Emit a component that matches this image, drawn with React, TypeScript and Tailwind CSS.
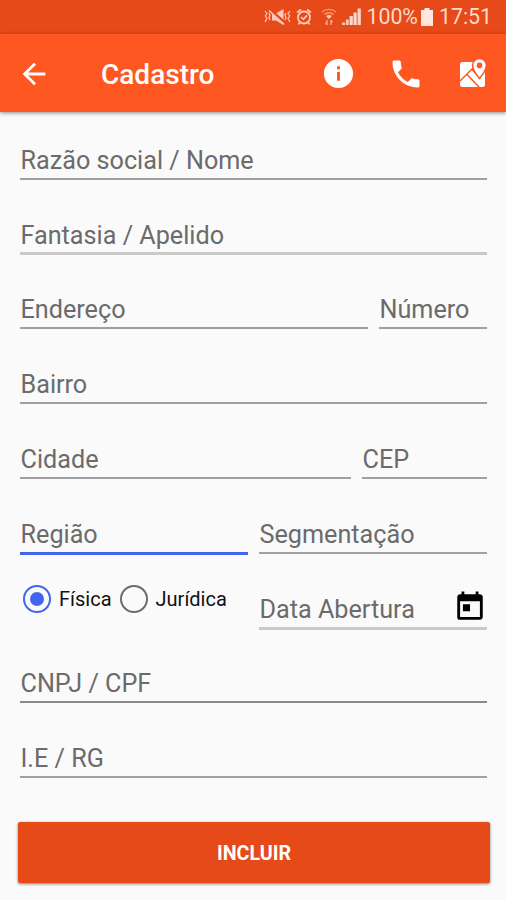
import type { ReactNode } from 'react'
import { MdArrowBack, MdInfo, MdPhone, MdToday } from 'react-icons/md'

interface FieldProps {
  label: string
  className?: string
  line?: string
  children?: ReactNode
}

function Field({ label, className = 'flex-1', line = 'h-[41px] border-b-2 border-[#a0a0a0]', children }: FieldProps) {
  return (
    <div className={`relative ${line} ${className}`}>
      <span className="block pt-1 pl-[0.5px] text-[25.2px] leading-9 text-[#6b6b6b] whitespace-nowrap">{label}</span>
      {children}
    </div>
  )
}

function Row({ children }: { children: ReactNode }) {
  return <div className="flex items-end gap-[11px] h-[74.8px]">{children}</div>
}

function Radio({ label, checked = false }: { label: string; checked?: boolean }) {
  return (
    <label className="flex items-center gap-2">
      <span
        className={`flex items-center justify-center size-7 rounded-full border-[2.5px] ${checked ? 'border-[#4265f0]' : 'border-[#6b6b6b]'}`}
      >
        {checked && <span className="size-3.5 rounded-full bg-[#4265f0]" />}
      </span>
      <span className="text-[20px] leading-7 text-[#111111]">{label}</span>
    </label>
  )
}

function MapIcon() {
  return (
    <svg className="w-[28px] h-[30px]" viewBox="0 0 28 30" fill="none">
      <rect x="1" y="4" width="25" height="25" rx="2.5" fill="white" />
      <path d="M0 24L15 9M8 16.5L21 30M13 11.5L20.5 19.5" stroke="#ff5722" strokeWidth="1.5" />
      <path
        d="M20.5 0.5C16.6 0.5 13.6 3.4 13.6 7.2C13.6 12 20.5 20.5 20.5 20.5C20.5 20.5 27.4 12 27.4 7.2C27.4 3.4 24.4 0.5 20.5 0.5Z"
        fill="white"
        stroke="#ff5722"
        strokeWidth="1.5"
      />
      <circle cx="20.5" cy="7.4" r="2.8" fill="#ff5722" />
    </svg>
  )
}

function StatusIcons() {
  return (
    <svg className="w-[100px] h-5" viewBox="0 0 100 20" fill="none">
      {/* Vibrate / muted */}
      <path
        d="M1 4L3 6.5L1.3 9L3 11.5L1 15M5 6L6 8L5 10.5L6 13M22 6L21 8L22 10.5L21 13M26 4L24 6.5L25.7 9L24 11.5L26 15"
        stroke="#ffc9b7"
        strokeWidth="1.2"
      />
      <path d="M8 6.5H12L19.5 2V18L12 13.5H8Z" fill="#ffc9b7" />
      <path d="M6 2.5L22 16.5" stroke="#e64a19" strokeWidth="2.4" />
      <path d="M5 3.5L20 17.5" stroke="#ffc9b7" strokeWidth="1.6" />
      {/* Alarm */}
      <circle cx="40" cy="10.5" r="6" stroke="#ffc9b7" strokeWidth="1.8" />
      <path d="M37 10L39.3 12.3L43 8.3M33 5.5L37 2.5M43 2.5L47 5.5M36 15L34.5 17.5M44 15L45.5 17.5" stroke="#ffc9b7" strokeWidth="1.7" />
      {/* Wifi */}
      <path d="M58 5C62 1.5 68 1.5 72 5M60.5 7.5C63 5.2 67 5.2 69.5 7.5" stroke="#f59b7e" strokeWidth="1.4" />
      <path d="M62 9Q65 7 68 9L65 12Z" fill="#ffc9b7" />
      <path d="M63 13V18M67 13V18M61.5 15.5L63 18M68.5 15.5L67 13" stroke="#f9ad95" strokeWidth="1.3" />
      {/* Signal */}
      <path d="M79.5 15.5V18M83.3 12.5V18" stroke="#ffc3b0" strokeWidth="3" />
      <path d="M87.2 9V18M91.1 5.5V18M95.2 1.5V18" stroke="#ffd9cc" strokeWidth="3.2" />
    </svg>
  )
}

export default function App() {
  return (
    <div className="w-[506px] h-[900px] bg-[#fafafa] overflow-hidden font-['Roboto',sans-serif]">
      {/* Status bar */}
      <div className="flex items-center justify-end h-[34px] pr-[14px] bg-[#e64a19] text-[#ffd9cc]">
        <StatusIcons />
        <span className="ml-[2px] text-[21.3px] leading-6">100%</span>
        <svg className="ml-[3px] w-[12px] h-[18px]" viewBox="0 0 12 18" fill="#ffe6de">
          <path d="M3.5 0H8.5V2H12V18H0V2H3.5Z" />
        </svg>
        <span className="ml-[6px] text-[21.3px] leading-6">17:51</span>
      </div>

      {/* App bar */}
      <header className="relative flex items-center h-[78px] pl-[17px] pr-[19px] bg-[#ff5722] text-white shadow-[0_1px_4px_rgba(0,0,0,0.45)]">
        <MdArrowBack className="mt-px size-[34px]" />
        <h1 className="ml-[50px] mt-1 text-[28px] leading-8 font-medium">Cadastro</h1>
        <div className="flex items-center ml-auto">
          <MdInfo className="mt-px size-[35px]" />
          <MdPhone className="ml-8 mt-px size-[36px]" />
          <div className="ml-[35px]">
            <MapIcon />
          </div>
        </div>
      </header>

      {/* Form */}
      <main className="-mt-[7px] px-5 pr-[19px]">
        <Row>
          <Field label="Razão social / Nome" />
        </Row>
        <Row>
          <Field label="Fantasia / Apelido" line="h-[41px] border-b-[3px] border-[#c9c9c9]" />
        </Row>
        <Row>
          <Field label="Endereço" />
          <Field label="Número" className="w-[108px]" />
        </Row>
        <Row>
          <Field label="Bairro" />
        </Row>
        <Row>
          <Field label="Cidade" />
          <Field label="CEP" className="w-[125px]" />
        </Row>
        <Row>
          <Field label="Região" line="h-[42px] -mb-px border-b-[3px] border-[#4265f0]" />
          <Field label="Segmentação" />
        </Row>
        <Row>
          <div className="flex flex-1 gap-2 pl-[3px] pb-4">
            <Radio label="Física" checked />
            <Radio label="Jurídica" />
          </div>
          <Field label="Data Abertura" className="w-[228px]" line="h-[42px] -mb-px border-b-[3px] border-[#cacaca]">
            <MdToday className="absolute right-0 top-[2px] size-[34px] text-black" />
          </Field>
        </Row>
        <Row>
          <Field label="CNPJ / CPF" line="h-[41px] border-b-2 border-[#8a8a8a]" />
        </Row>
        <Row>
          <Field label="I.E / RG" />
        </Row>
        <button className="block w-[472px] h-[61px] mt-[44px] pt-[3px] -ml-[2px] rounded-[2px] bg-[#e64a19] text-[19.7px] font-bold text-white shadow-[0_1px_3px_rgba(0,0,0,0.5)]">
          INCLUIR
        </button>
      </main>
    </div>
  )
}
